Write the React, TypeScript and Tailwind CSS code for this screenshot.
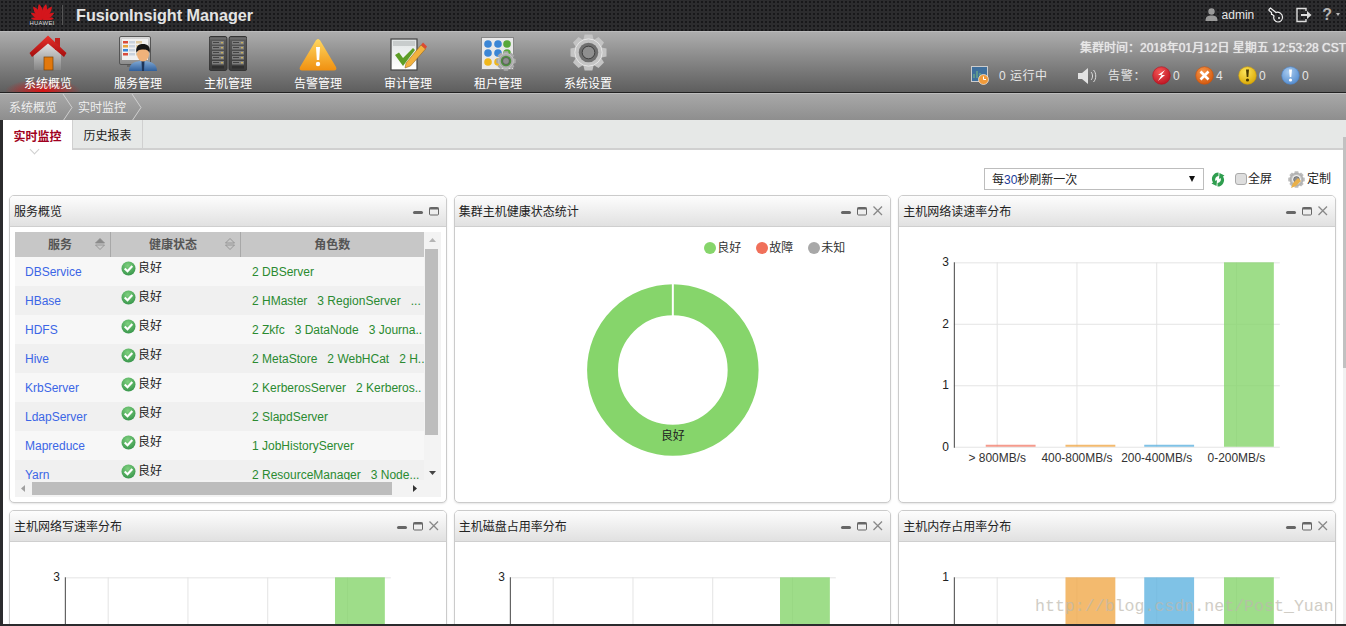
import React from "react";

const IconBox = ({ w, h, vb, children }: { w: number; h: number; vb?: string; children: React.ReactNode }) => (
  <svg width={w} height={h} viewBox={vb ?? `0 0 ${w} ${h}`} className="block shrink-0">
    {children}
  </svg>
);

const HuaweiLogo = () => (
  <svg width="23" height="17" viewBox="-12 -17.5 24 18" className="block">
    {[-84, -60, -36, -13, 13, 36, 60, 84].map((a) => (
      <path key={a} d="M0 0 C-3.4 -5 -3.4 -12 0 -17 C3.4 -12 3.4 -5 0 0 Z" fill="#d4161c" transform={`rotate(${a}) scale(${Math.abs(a) > 70 ? 0.72 : Math.abs(a) > 50 ? 0.85 : 1})`} />
    ))}
  </svg>
);

const HomeIcon = () => (
  <IconBox w={38} h={36}>
    <defs>
      <linearGradient id="roof" x1="0" y1="0" x2="0" y2="1"><stop offset="0" stopColor="#e8322c" /><stop offset="1" stopColor="#a50d0d" /></linearGradient>
      <linearGradient id="wall" x1="0" y1="0" x2="0" y2="1"><stop offset="0" stopColor="#e9e9e9" /><stop offset="1" stopColor="#858585" /></linearGradient>
    </defs>
    <path d="M5 19 L19 6 L32 19 V35 H5 Z" fill="url(#wall)" />
    <rect x="15" y="22" width="9" height="13" fill="#e2780c" stroke="#7a4206" strokeWidth=".7" />
    <rect x="26" y="3" width="5" height="12" fill="#c3201c" />
    <path d="M19 0.5 L37.5 18 L35 22 L19 8.5 L3 22 L0.5 18 Z" fill="url(#roof)" />
  </IconBox>
);

const ServiceIcon = () => (
  <IconBox w={38} h={35}>
    <defs>
      <linearGradient id="mon" x1="0" y1="0" x2="0" y2="1"><stop offset="0" stopColor="#dadada" /><stop offset="1" stopColor="#8a8a8a" /></linearGradient>
      <linearGradient id="suit" x1="0" y1="0" x2="0" y2="1"><stop offset="0" stopColor="#7fa8d4" /><stop offset="1" stopColor="#2f5f9c" /></linearGradient>
    </defs>
    <rect x="0.5" y="0.5" width="31" height="28" rx="1.5" fill="url(#mon)" stroke="#555" />
    <rect x="3" y="3" width="26" height="21" fill="#f0f0f0" />
    {[5, 9, 13, 17].map((y, i) => (
      <g key={y}>
        <rect x="4" y={y} width="5" height="2.5" fill={["#d94a3a", "#e8a33a", "#3a86d9", "#d94a3a"][i]} />
        <rect x="10" y={y} width="6" height="2.5" fill="#c9d2dd" />
        <rect x="17" y={y} width="6" height="2.5" fill="#dfc9a0" />
      </g>
    ))}
    <rect x="8" y="29" width="14" height="2" fill="#666" />
    <path d="M10 35 C10 27 16 25 24 25 C31 25 38 27 38 35 Z" fill="url(#suit)" />
    <path d="M22.5 25 L25.5 25 L25 35 L23 35 Z" fill="#1e3558" />
    <ellipse cx="24" cy="18" rx="6" ry="7.5" fill="#f0b27a" />
    <path d="M17.5 17 C16 9 21 8 24 8 C28 8 32 10 30.5 17 C29.5 14 27 13.5 24 13.5 C21 13.5 18.5 14 17.5 17 Z" fill="#151515" />
  </IconBox>
);

const ServerIcon = () => (
  <IconBox w={38} h={35}>
    <defs>
      <linearGradient id="rack" x1="0" y1="0" x2="0" y2="1"><stop offset="0" stopColor="#5c5c5c" /><stop offset="1" stopColor="#3a3a3a" /></linearGradient>
    </defs>
    {[0, 20].map((x) => (
      <g key={x}>
        <rect x={x} y="0.5" width="18" height="34" rx="2" fill="url(#rack)" stroke="#343434" />
        <rect x={x + 1} y="1.5" width="16" height="2" fill="#6c6c6c" />
        {[5, 10, 15, 20, 25].map((y) => (
          <g key={y}>
            <rect x={x + 3} y={y} width="12" height="3.5" fill="#7e7e7e" />
            <rect x={x + 4} y={y + 1} width="6" height="1" fill="#444" />
            <rect x={x + 12} y={y + 1} width="2" height="1.4" fill="#c8b060" />
          </g>
        ))}
        <rect x={x + 3} y="30" width="12" height="2.5" fill="#2f2f2f" />
      </g>
    ))}
  </IconBox>
);

const WarnIcon = () => (
  <IconBox w={38} h={33}>
    <defs>
      <linearGradient id="warn" x1="0" y1="0" x2="0" y2="1"><stop offset="0" stopColor="#ffd760" /><stop offset="1" stopColor="#f09010" /></linearGradient>
    </defs>
    <path d="M19 1 C20 1 21 2 21.5 3 L37 29 C38 31 37 32.5 35 32.5 H3 C1 32.5 0 31 1 29 L16.5 3 C17 2 18 1 19 1 Z" fill="url(#warn)" />
    <path d="M17 9 H21 L20.2 22 H17.8 Z" fill="#fff" />
    <circle cx="19" cy="26" r="2.2" fill="#fff" />
  </IconBox>
);

const AuditIcon = () => (
  <IconBox w={37} h={33}>
    <defs>
      <linearGradient id="paper" x1="0" y1="0" x2="0" y2="1"><stop offset="0" stopColor="#e0e4e4" /><stop offset="1" stopColor="#ffffff" /></linearGradient>
    </defs>
    <rect x="1" y="1" width="26" height="31" fill="url(#paper)" stroke="#444" strokeWidth="1.2" />
    <rect x="3" y="3" width="22" height="5" fill="#c8cccc" />
    <path d="M5 17 L9 14.5 L13 20 L23 10 L25 12 L13 28 Z" fill="#5d9e26" />
    <path d="M16 25 L31 7 L35.5 11 L20.5 28 L15 30 Z" fill="#f3b23e" stroke="#8c5a10" strokeWidth=".5" />
    <path d="M31 7 L33 4.5 L37 8.5 L35.5 11 Z" fill="#dd4a30" />
  </IconBox>
);

const Gear = ({ size, body = "#c4c4c4", hole = "#6f6f6f", inner = "#e6e6e6" }: { size: number; body?: string; hole?: string; inner?: string }) => (
  <svg width={size} height={size} viewBox="0 0 38 38" className="block shrink-0">
    {[0, 45, 90, 135, 180, 225, 270, 315].map((a) => (
      <path key={a} d="M15 0.5 H23 L24.5 7 H13.5 Z" fill={body} transform={`rotate(${a} 19 19)`} />
    ))}
    <circle cx="19" cy="19" r="14.5" fill={body} />
    <circle cx="19" cy="19" r="14" fill="none" stroke={inner} strokeWidth="1" />
    <circle cx="19" cy="19" r="10" fill={hole} />
    <circle cx="19" cy="19" r="6.5" fill="#8f8f8f" stroke="#3f3f3f" strokeWidth="1" />
  </svg>
);

const TenantIcon = () => (
  <div className="relative w-[35px] h-[34px]">
    <IconBox w={35} h={34}>
      <rect x="0.5" y="0.5" width="32" height="32" fill="#e9e9e9" stroke="#888" />
      {[
        [7, 7, "#3b86d6"], [17, 7, "#3b86d6"], [26, 7, "#57a83a"],
        [7, 16, "#3b86d6"], [17, 16, "#3b86d6"], [26, 16, "#57a83a"],
        [7, 25, "#f0b71c"], [17, 25, "#f0b71c"],
      ].map(([x, y, c], i) => (
        <circle key={i} cx={x as number} cy={y as number} r="3.8" fill={c as string} />
      ))}
    </IconBox>
    <div className="absolute right-0 bottom-0">
      <Gear size={20} body="#a9a9a9" hole="#4e8f3f" inner="#d8d8d8" />
    </div>
  </div>
);

const navItems = [
  { label: "系统概览", icon: <HomeIcon />, active: true },
  { label: "服务管理", icon: <ServiceIcon /> },
  { label: "主机管理", icon: <ServerIcon /> },
  { label: "告警管理", icon: <WarnIcon /> },
  { label: "审计管理", icon: <AuditIcon /> },
  { label: "租户管理", icon: <TenantIcon /> },
  { label: "系统设置", icon: <Gear size={37} /> },
];

const Alarm = ({ c1, c2, value, glyph }: { c1: string; c2: string; value: number; glyph: React.ReactNode }) => {
  const id = `al${c1.slice(1)}`;
  return (
    <div className="flex items-center w-[43px]">
      <svg width="19" height="19" viewBox="0 0 19 19" className="block shrink-0">
        <defs>
          <radialGradient id={id} cx="0.4" cy="0.3" r="0.8"><stop offset="0" stopColor={c1} /><stop offset="1" stopColor={c2} /></radialGradient>
        </defs>
        <circle cx="9.5" cy="9.5" r="8.8" fill={`url(#${id})`} stroke={c2} strokeWidth=".6" />
        {glyph}
      </svg>
      <span className="ml-[2px] text-[12px] text-[#e6e6e6]">{value}</span>
    </div>
  );
};

const Bang = ({ color }: { color: string }) => (
  <g fill={color}>
    <path d="M8 3.5 H11 L10.3 11 H8.7 Z" />
    <circle cx="9.5" cy="14" r="1.6" />
  </g>
);

const Controls = ({ close = true }: { close?: boolean }) => (
  <div className="flex items-center">
    <svg width="16" height="12" viewBox="0 0 16 12" className="block"><rect x="3" y="6" width="10" height="3" rx="1.5" fill="#666" /></svg>
    <svg width="16" height="12" viewBox="0 0 16 12" className="block"><rect x="3.5" y="2.5" width="9" height="7.5" rx="1" fill="none" stroke="#666" /><rect x="3.5" y="2.5" width="9" height="2" fill="#666" /></svg>
    {close && (
      <svg width="16" height="12" viewBox="0 0 16 12" className="block"><path d="M3.5 1.5 L12 10 M12 1.5 L3.5 10" stroke="#888" strokeWidth="1.3" /></svg>
    )}
  </div>
);

const Panel = ({ title, close = true, children }: { title: string; close?: boolean; children: React.ReactNode }) => (
  <div className="h-[308px] flex flex-col border border-[#cbcbcb] rounded-[5px] bg-white shadow-[0_1px_2px_rgba(0,0,0,0.1)] overflow-hidden">
    <div className="h-[31px] shrink-0 flex items-center justify-between pl-[4px] pr-[4px] border-b border-[#cfcfcf] bg-gradient-to-b from-[#fdfdfd] to-[#e1e1e1]">
      <span className="text-[12px] text-[#222] pt-[2px]">{title}</span>
      <Controls close={close} />
    </div>
    <div className="flex-1 min-h-0">{children}</div>
  </div>
);

const SortArrows = ({ filled }: { filled?: boolean }) => (
  <svg width="10" height="12" viewBox="0 0 10 12" className="block">
    <path d="M5 0.5 L9.5 5 H0.5 Z" fill={filled ? "#8a8a8a" : "none"} stroke="#8a8a8a" strokeWidth=".8" />
    <path d="M5 11.5 L9.5 7 H0.5 Z" fill="none" stroke="#8a8a8a" strokeWidth=".8" />
  </svg>
);

const OkIcon = () => (
  <svg width="15" height="15" viewBox="0 0 15 15" className="block shrink-0">
    <defs>
      <radialGradient id="ok" cx="0.45" cy="0.3" r="0.8"><stop offset="0" stopColor="#7fd07f" /><stop offset="1" stopColor="#2f8f45" /></radialGradient>
    </defs>
    <circle cx="7.5" cy="7.5" r="7" fill="url(#ok)" />
    <path d="M3.7 7.6 L6.5 10.3 L11.3 5" fill="none" stroke="#fff" strokeWidth="2.1" />
  </svg>
);

const services: [string, string][] = [
  ["DBService", "2 DBServer"],
  ["HBase", "2 HMaster   3 RegionServer   ..."],
  ["HDFS", "2 Zkfc   3 DataNode   3 Journa.."],
  ["Hive", "2 MetaStore   2 WebHCat   2 H.."],
  ["KrbServer", "2 KerberosServer   2 Kerberos.."],
  ["LdapServer", "2 SlapdServer"],
  ["Mapreduce", "1 JobHistoryServer"],
  ["Yarn", "2 ResourceManager   3 Node..."],
];

const ServiceTable = () => (
  <div className="pt-[5px] px-[5px]">
    <div className="flex h-[248px]">
      <div className="w-[409px] overflow-hidden">
        <div className="h-[25px] flex items-center bg-[#c7c7c7] text-[12px] font-bold text-[#555]">
          <div className="w-[96px] h-full flex items-center justify-center relative border-r border-[#a8a8a8]">
            <span className="pr-[5px]">服务</span>
            <div className="absolute right-[5px] top-[6px]"><SortArrows filled /></div>
          </div>
          <div className="w-[130px] h-full flex items-center justify-center relative border-r border-[#a8a8a8]">
            <span className="pr-[5px]">健康状态</span>
            <div className="absolute right-[5px] top-[6px]"><SortArrows /></div>
          </div>
          <div className="flex-1 text-center">角色数</div>
        </div>
        {services.map(([name, roles], i) => (
          <div key={name} className={`h-[29px] flex text-[12px] ${i % 2 ? "bg-[#f0f0f0]" : "bg-[#f7f7f7]"}`}>
            <div className="w-[96px] pl-[10px] pt-[6px] text-[#3b66e6]">{name}</div>
            <div className="w-[130px] pl-[10px] pt-[4px] flex items-start gap-[2px] text-[#222]">
              <OkIcon />
              <span className="leading-[15px]">良好</span>
            </div>
            <div className="flex-1 pl-[11px] pt-[6px] text-[#2a8a30] whitespace-pre overflow-hidden">{roles}</div>
          </div>
        ))}
      </div>
      <div className="w-[17px] flex flex-col items-center bg-[#f3f3f3]">
        <svg width="17" height="17" viewBox="0 0 17 17" className="block shrink-0"><path d="M5 10 L8.5 6 L12 10 Z" fill="#b5b5b5" /></svg>
        <div className="w-[13px] h-[186px] ml-[-2px] bg-[#bdbdbd]" />
        <svg width="17" height="27" viewBox="0 0 17 27" className="block shrink-0 mt-auto"><path d="M5 18 L8.5 22 L12 18 Z" fill="#444" /></svg>
      </div>
    </div>
    <div className="flex items-center h-[17px] bg-[#f3f3f3]">
      <svg width="17" height="17" viewBox="0 0 17 17" className="block shrink-0"><path d="M10 5 L6 8.5 L10 12 Z" fill="#a0a0a0" /></svg>
      <div className="w-[360px] h-[13px] bg-[#bdbdbd]" />
      <svg width="17" height="17" viewBox="0 0 17 17" className="block shrink-0 ml-[14px]"><path d="M7 5 L11 8.5 L7 12 Z" fill="#333" /></svg>
    </div>
  </div>
);

const Donut = () => (
  <div className="h-full flex flex-col">
    <div className="flex justify-end items-center gap-[15px] pt-[12px] pr-[45px] text-[12px] text-[#333]">
      {[["#86d56b", "良好"], ["#f0705a", "故障"], ["#a8a8a8", "未知"]].map(([c, t]) => (
        <div key={t} className="flex items-center gap-px">
          <span className="w-[12px] h-[12px] rounded-full" style={{ backgroundColor: c }} />
          <span>{t}</span>
        </div>
      ))}
    </div>
    <svg className="block flex-1 w-full" viewBox="0 0 437 245">
      <circle cx="218.5" cy="113" r="70.5" fill="none" stroke="#86d56b" strokeWidth="31" />
      <rect x="217.5" y="26" width="2" height="33" fill="#fff" />
      <text x="218.5" y="183" textAnchor="middle" fontSize="12" fill="#222">良好</text>
    </svg>
  </div>
);

const BarChart = ({ max, bars }: { max: number; bars: { x: number; c: string; h: number }[] }) => {
  const xs = [98.5, 178.5, 258.5, 338.5];
  const labels = ["> 800MB/s", "400-800MB/s", "200-400MB/s", "0-200MB/s"];
  const ticks = Array.from({ length: max + 1 }, (_, i) => i);
  const yOf = (v: number) => 220 - (v / max) * 185;
  return (
    <svg className="block w-full" height="275" viewBox="0 0 437 275">
      {ticks.map((t) => (
        <g key={t}>
          <line x1="55" x2="382" y1={yOf(t) + 0.5} y2={yOf(t) + 0.5} stroke="#e4e4e4" />
          <text x="50" y={yOf(t) + 4} textAnchor="end" fontSize="12" fill="#222">{t}</text>
        </g>
      ))}
      {xs.map((x) => (
        <line key={x} x1={x} x2={x} y1="35" y2="220" stroke="#e4e4e4" />
      ))}
      <line x1="55.5" x2="55.5" y1="35" y2="221" stroke="#444" />
      {bars.map((b) => (
        <rect key={b.x} x={b.x} y={220 - b.h} width="50" height={b.h} fill={b.c} fillOpacity=".8" />
      ))}
      {labels.map((l, i) => (
        <text key={l} x={xs[i]} y="235" textAnchor="middle" fontSize="12" fill="#333">{l}</text>
      ))}
    </svg>
  );
};

const C = { red: "#f3816f", orange: "#f0a94a", blue: "#5fb3e0", green: "#86d56b" };
const lowBars = (last: number) => [
  { x: 87, c: C.red, h: 2 },
  { x: 167, c: C.orange, h: 2 },
  { x: 246, c: C.blue, h: 2 },
  { x: 326, c: C.green, h: last },
];
const fullBars = [
  { x: 87, c: C.red, h: 2 },
  { x: 167, c: C.orange, h: 185 },
  { x: 246, c: C.blue, h: 185 },
  { x: 326, c: C.green, h: 185 },
];

export default function App() {
  return (
    <div className="relative w-[1346px] h-[626px] overflow-hidden flex flex-col bg-[#2b2b2d] font-['Liberation_Sans','Noto_Sans_CJK_SC',sans-serif]">
      {/* top bar */}
      <div className="h-[31px] shrink-0 flex items-center justify-between bg-[#2c2c2e] bg-[radial-gradient(#18181a_1px,transparent_1.2px)] bg-[length:4px_4px]">
        <div className="flex items-center">
          <div className="ml-[30px] w-[24px] flex flex-col items-center">
            <HuaweiLogo />
            <span className="text-[6px] leading-[7px] text-[#ddd] tracking-[0.2px]">HUAWEI</span>
          </div>
          <div className="ml-[8px] w-px h-[20px] bg-[#555]" />
          <span className="ml-[13px] text-[16.2px] font-bold text-[#e4e4e4]">FusionInsight Manager</span>
        </div>
        <div className="flex items-center pr-[6px] pb-[2px]">
          <svg width="13" height="13" viewBox="0 0 13 13" className="block"><circle cx="6.5" cy="3.5" r="3.2" fill="#9a9a9a" /><path d="M0.5 13 C0.5 8 3 7.5 6.5 7.5 C10 7.5 12.5 8 12.5 13 Z" fill="#9a9a9a" /></svg>
          <span className="ml-[4px] text-[12px] text-[#e6e6e6]">admin</span>
          <svg width="16" height="16" viewBox="0 0 16 16" className="block ml-[14px]"><path d="M1 2.5 L2.5 1 L8 5.5 C10.5 4.5 14.5 6.5 14.5 10 C14.5 13 12.5 15 10 15 C7 15 5 12 6 9 L4.5 7.5 L3.5 7.5 L3.5 5.5 L1 3.5 Z" fill="none" stroke="#f0f0f0" strokeWidth="1.2" /><circle cx="11" cy="11" r="1" fill="#f0f0f0" /></svg>
          <svg width="16" height="16" viewBox="0 0 16 16" className="block ml-[12px]"><path d="M10 4 V1.5 H1 V14.5 H10 V12" fill="none" stroke="#ddd" strokeWidth="1.4" /><path d="M5 7 H11 V4 L15.5 8 L11 12 V9 H5 Z" fill="#ddd" /></svg>
          <span className="ml-[10px] text-[16px] font-bold text-[#b5b5b5] leading-none">?</span>
          <span className="ml-[4px] w-0 h-0 border-x-[2.5px] border-x-transparent border-t-[3px] border-t-[#bbb]" />
        </div>
      </div>

      {/* nav */}
      <div className="h-[62px] shrink-0 flex justify-between bg-gradient-to-b from-[#adadad] to-[#5e5e5e] border-t border-[#bbb] border-b border-b-[#222] overflow-hidden">
        <div className="flex pl-[3px]">
          {navItems.map((n) => (
            <div key={n.label} className="relative w-[90px] flex flex-col items-center">
              {n.active && <div className="absolute left-[2px] right-[12px] bottom-[-11px] h-[24px] bg-[radial-gradient(closest-side,rgba(225,15,15,0.95),transparent)]" />}
              <div className="h-[40px] flex items-end pb-[1px]">{n.icon}</div>
              <span className="relative text-[12px] leading-[16px] mt-[4px] text-white">{n.label}</span>
            </div>
          ))}
        </div>
        <div className="w-[375px] shrink-0 text-[12px] text-[#e6e6e6] whitespace-nowrap">
          <div className="pl-[109px] pt-[8px] leading-[16px] [text-shadow:0_0_1px_#ffffff]">集群时间：2018年01月12日 星期五 12:53:28 CST</div>
          <div className="flex items-center pt-[10px]">
            <svg width="18" height="19" viewBox="0 0 18 19" className="block shrink-0"><rect x="0.5" y="0.5" width="16" height="15" fill="#3f6f9c" stroke="#ccc" /><path d="M3 12 V8 M6 12 V5 M9 12 V7" stroke="#7fc07f" /><circle cx="12.5" cy="13.5" r="5" fill="#f09a3a" stroke="#fff" strokeWidth=".6" /><path d="M12.5 10.5 V13.5 H15" stroke="#fff" fill="none" /></svg>
            <span className="ml-[10px] w-[78px] tracking-[0.5px]">0 运行中</span>
            <svg width="20" height="18" viewBox="0 0 20 18" className="block shrink-0"><path d="M1 6 H5 L11 1 V17 L5 12 H1 Z" fill="#e2e2e2" /><path d="M14 5 C16 7 16 11 14 13 M16.5 3 C19.5 6 19.5 12 16.5 15" stroke="#ddd" fill="none" strokeWidth="1" /></svg>
            <span className="ml-[11px] w-[44px] tracking-[0.8px]">告警：</span>
            <Alarm c1="#f55555" c2="#b80f1e" value={0} glyph={<path d="M13 4 L6 9 H9.5 L6 15 L13 9 H9.5 Z" fill="#fff" />} />
            <Alarm c1="#f8974a" c2="#cf5208" value={4} glyph={<path d="M5.5 5.5 L13.5 13.5 M13.5 5.5 L5.5 13.5" stroke="#fff" strokeWidth="2.6" />} />
            <Alarm c1="#ffe65a" c2="#d6a300" value={0} glyph={<Bang color="#4a3a00" />} />
            <Alarm c1="#a9ccf0" c2="#4d87cc" value={0} glyph={<Bang color="#fff" />} />
          </div>
        </div>
      </div>

      {/* breadcrumb */}
      <div className="h-[27px] shrink-0 flex items-center bg-gradient-to-b from-[#a8a8a8] to-[#8e8e8e] border-t border-[#bdbdbd] text-[12px] text-[#eee]">
        <span className="ml-[9px] pt-[2px]">系统概览</span>
        <svg width="12" height="27" viewBox="0 0 12 27" className="block ml-[5px]"><path d="M1 0 L10 13.5 L1 27" fill="none" stroke="#d0d0d0" /></svg>
        <span className="ml-[4px] pt-[2px]">实时监控</span>
        <svg width="12" height="27" viewBox="0 0 12 27" className="block ml-[5px]"><path d="M1 0 L10 13.5 L1 27" fill="none" stroke="#d0d0d0" /></svg>
      </div>

      {/* main */}
      <div className="flex-1 min-h-0 flex">
        <div className="w-[3px] shrink-0 bg-[#2b2b2d]" />
        <div className="flex-1 min-w-0 flex flex-col bg-white overflow-hidden">
          <div className="relative h-[30px] shrink-0 flex bg-[#e6e8e7] border-b-2 border-[#d0d0d0] text-[12px]">
            <div className="relative w-[70px] h-[30px] pt-[3px] flex items-center justify-center bg-white font-bold text-[#a00020] border-r border-[#d0d0d0]">
              实时监控
              <span className="absolute left-[28px] bottom-[-3px] w-[7px] h-[7px] rotate-45 bg-white border-r border-b border-[#cfcfcf]" />
            </div>
            <div className="w-[70px] pt-[3px] flex items-center justify-center text-[#222] border-r border-[#d0d0d0]">历史报表</div>
          </div>

          <div className="h-[45px] shrink-0 flex items-start justify-end pt-[18px] pr-[12px] text-[12px] text-[#222]">
            <div className="w-[220px] h-[22px] flex items-center justify-between pl-[7px] pr-[8px] border border-[#bdbdbd]">
              <span className="pt-[2px]">每<span className="text-[#1a3a9a]">30</span>秒刷新一次</span>
              <span className="w-0 h-0 border-x-[3.5px] border-x-transparent border-t-[6px] border-t-[#111]" />
            </div>
            <svg width="14" height="15" viewBox="0 0 14 15" className="block ml-[7px] mt-[4px]"><path d="M7.5 0.5 A6.5 6.5 0 0 0 2 10.5 L0.5 11.5 L5.5 14 L6 8 L4.5 9 A3.5 3.5 0 0 1 7.5 4 Z" fill="#2f9e4f" /><path d="M6.5 14.5 A6.5 6.5 0 0 0 12 4.5 L13.5 3.5 L8.5 1 L8 7 L9.5 6 A3.5 3.5 0 0 1 6.5 11 Z" fill="#2f9e4f" /></svg>
            <span className="ml-[10px] mt-[5px] w-[12px] h-[12px] rounded-[3px] border border-[#aaa] bg-[#dedede]" />
            <span className="ml-[1px] mt-[3px] leading-[16px]">全屏</span>
            <div className="ml-[16px] mt-[3px] relative w-[17px] h-[17px]">
              <Gear size={17} body="#bdbdbd" hole="#eeeeee" inner="#999" />
              <svg width="11" height="11" viewBox="0 0 11 11" className="absolute left-[3px] top-[6px] block"><path d="M0 11 L2 6 L7 1 L10 4 L5 9 Z" fill="#e9b04a" /></svg>
            </div>
            <span className="ml-[2px] mt-[3px] leading-[16px]">定制</span>
          </div>

          <div className="grid grid-cols-3 gap-x-[7px] gap-y-[7px] pl-[6px] pr-[7px]">
            <Panel title="服务概览" close={false}><ServiceTable /></Panel>
            <Panel title="集群主机健康状态统计"><Donut /></Panel>
            <Panel title="主机网络读速率分布"><BarChart max={3} bars={lowBars(185)} /></Panel>
            <Panel title="主机网络写速率分布"><BarChart max={3} bars={lowBars(185)} /></Panel>
            <Panel title="主机磁盘占用率分布"><BarChart max={3} bars={lowBars(185)} /></Panel>
            <Panel title="主机内存占用率分布"><BarChart max={1} bars={fullBars} /></Panel>
          </div>
        </div>
        <div className="w-[3px] shrink-0 flex flex-col bg-[#f1f1f1]">
          <div className="h-[17px] bg-[#e6e8e7]" />
          <div className="h-[231px] bg-[#c1c1c1]" />
        </div>
      </div>

      {/* footer strip */}
      <div className="h-[2px] shrink-0 bg-[#2b2b2d]" />

      <span className="absolute left-[1035px] top-[597px] font-['Liberation_Mono',monospace] text-[16.6px] leading-[20px] text-[#bdb9ae] opacity-70 whitespace-nowrap">http://blog.csdn.net/Post_Yuan</span>
    </div>
  );
}
